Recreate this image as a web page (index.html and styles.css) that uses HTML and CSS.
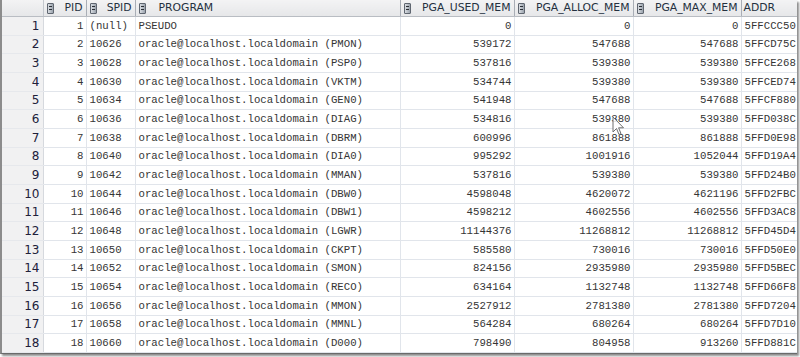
FILE: index.html
```html
<!DOCTYPE html>
<html>
<head>
  <title>Query Result</title>
  <link rel="stylesheet" href="styles.css">
</head>
<body>
  <div class="grid-frame">
    <table class="result-grid">
      <colgroup>
        <col class="c-num">
        <col class="c-pid">
        <col class="c-spid">
        <col class="c-program">
        <col class="c-used">
        <col class="c-alloc">
        <col class="c-max">
        <col class="c-addr">
      </colgroup>
      <thead>
        <tr>
          <th class="row-head"></th>
          <th><div class="head right"><span class="sort"></span><span class="title">PID</span></div></th>
          <th><div class="head right"><span class="sort"></span><span class="title">SPID</span></div></th>
          <th><div class="head"><span class="sort wide"></span><span class="title">PROGRAM</span></div></th>
          <th><div class="head right"><span class="sort"></span><span class="title">PGA_USED_MEM</span></div></th>
          <th><div class="head right"><span class="sort"></span><span class="title">PGA_ALLOC_MEM</span></div></th>
          <th><div class="head right"><span class="sort"></span><span class="title">PGA_MAX_MEM</span></div></th>
          <th><div class="head plain"><span class="title">ADDR</span></div></th>
        </tr>
      </thead>
      <tbody>
        <tr><td class="row-num">1</td><td class="num">1</td><td>(null)</td><td>PSEUDO</td><td class="num">0</td><td class="num">0</td><td class="num">0</td><td>5FFCCC50</td></tr>
        <tr><td class="row-num">2</td><td class="num">2</td><td>10626</td><td>oracle@localhost.localdomain (PMON)</td><td class="num">539172</td><td class="num">547688</td><td class="num">547688</td><td>5FFCD75C</td></tr>
        <tr><td class="row-num">3</td><td class="num">3</td><td>10628</td><td>oracle@localhost.localdomain (PSP0)</td><td class="num">537816</td><td class="num">539380</td><td class="num">539380</td><td>5FFCE268</td></tr>
        <tr><td class="row-num">4</td><td class="num">4</td><td>10630</td><td>oracle@localhost.localdomain (VKTM)</td><td class="num">534744</td><td class="num">539380</td><td class="num">539380</td><td>5FFCED74</td></tr>
        <tr><td class="row-num">5</td><td class="num">5</td><td>10634</td><td>oracle@localhost.localdomain (GEN0)</td><td class="num">541948</td><td class="num">547688</td><td class="num">547688</td><td>5FFCF880</td></tr>
        <tr><td class="row-num">6</td><td class="num">6</td><td>10636</td><td>oracle@localhost.localdomain (DIAG)</td><td class="num">534816</td><td class="num">539380</td><td class="num">539380</td><td>5FFD038C</td></tr>
        <tr><td class="row-num">7</td><td class="num">7</td><td>10638</td><td>oracle@localhost.localdomain (DBRM)</td><td class="num">600996</td><td class="num">861888</td><td class="num">861888</td><td>5FFD0E98</td></tr>
        <tr><td class="row-num">8</td><td class="num">8</td><td>10640</td><td>oracle@localhost.localdomain (DIA0)</td><td class="num">995292</td><td class="num">1001916</td><td class="num">1052044</td><td>5FFD19A4</td></tr>
        <tr><td class="row-num">9</td><td class="num">9</td><td>10642</td><td>oracle@localhost.localdomain (MMAN)</td><td class="num">537816</td><td class="num">539380</td><td class="num">539380</td><td>5FFD24B0</td></tr>
        <tr><td class="row-num">10</td><td class="num">10</td><td>10644</td><td>oracle@localhost.localdomain (DBW0)</td><td class="num">4598048</td><td class="num">4620072</td><td class="num">4621196</td><td>5FFD2FBC</td></tr>
        <tr><td class="row-num">11</td><td class="num">11</td><td>10646</td><td>oracle@localhost.localdomain (DBW1)</td><td class="num">4598212</td><td class="num">4602556</td><td class="num">4602556</td><td>5FFD3AC8</td></tr>
        <tr><td class="row-num">12</td><td class="num">12</td><td>10648</td><td>oracle@localhost.localdomain (LGWR)</td><td class="num">11144376</td><td class="num">11268812</td><td class="num">11268812</td><td>5FFD45D4</td></tr>
        <tr><td class="row-num">13</td><td class="num">13</td><td>10650</td><td>oracle@localhost.localdomain (CKPT)</td><td class="num">585580</td><td class="num">730016</td><td class="num">730016</td><td>5FFD50E0</td></tr>
        <tr><td class="row-num">14</td><td class="num">14</td><td>10652</td><td>oracle@localhost.localdomain (SMON)</td><td class="num">824156</td><td class="num">2935980</td><td class="num">2935980</td><td>5FFD5BEC</td></tr>
        <tr><td class="row-num">15</td><td class="num">15</td><td>10654</td><td>oracle@localhost.localdomain (RECO)</td><td class="num">634164</td><td class="num">1132748</td><td class="num">1132748</td><td>5FFD66F8</td></tr>
        <tr><td class="row-num">16</td><td class="num">16</td><td>10656</td><td>oracle@localhost.localdomain (MMON)</td><td class="num">2527912</td><td class="num">2781380</td><td class="num">2781380</td><td>5FFD7204</td></tr>
        <tr><td class="row-num">17</td><td class="num">17</td><td>10658</td><td>oracle@localhost.localdomain (MMNL)</td><td class="num">564284</td><td class="num">680264</td><td class="num">680264</td><td>5FFD7D10</td></tr>
        <tr><td class="row-num">18</td><td class="num">18</td><td>10660</td><td>oracle@localhost.localdomain (D000)</td><td class="num">798490</td><td class="num">804958</td><td class="num">913260</td><td>5FFD881C</td></tr>
      </tbody>
    </table>

    <!-- mouse pointer left in the screenshot -->
    <svg class="pointer" width="13" height="20" viewBox="0 0 13 20">
      <path d="M1 1 L1 16 L4.5 12.5 L7 18.5 L9 17.6 L6.6 11.8 L11.5 11.8 Z" fill="#fff" fill-opacity="0.85" stroke="#6e6e6e" stroke-width="1"/>
    </svg>
  </div>
</body>
</html>
```

FILE: styles.css
```css
html, body {
  margin: 0;
  padding: 0;
  background: #fff;
}

body {
  width: 800px;
  height: 357px;
  overflow: hidden;
}

.grid-frame {
  position: relative;
  width: 795px;
  height: 353px;
  border-left: 2px solid #8c8c8c;
  border-bottom: 1px solid #6a6a6a;
  box-shadow: 2px 2px 2px rgba(0, 0, 0, 0.45);
  overflow: hidden;
  background: #fff;
}

.result-grid {
  width: 795px;
  table-layout: fixed;
  border-collapse: collapse;
  font-family: "Liberation Mono", monospace;
  font-size: 10.7px;
  color: #353535;
}

.c-num { width: 41px; }
.c-pid { width: 43px; }
.c-spid { width: 49px; }
.c-program { width: 265px; }
.c-used { width: 114px; }
.c-alloc { width: 119px; }
.c-max { width: 108px; }
.c-addr { width: 56px; }

.result-grid th {
  height: 16px;
  padding: 0;
  background: linear-gradient(#f3f3f4, #e6e7e9);
  border-right: 1px solid #a9aeb6;
  border-bottom: 1px solid #b9bdc3;
  font-family: "DejaVu Sans", sans-serif;
  font-size: 10.8px;
  font-weight: normal;
  color: #243040;
  white-space: nowrap;
  overflow: hidden;
}

.head {
  display: flex;
  align-items: center;
  height: 16px;
  padding: 0 3px 0 3px;
  overflow: hidden;
}

.head.plain {
  padding-left: 2px;
}

.head .title {
  flex: none;
  line-height: 16px;
}

.head.right .title {
  margin-left: auto;
}

.sort {
  flex: none;
  position: relative;
  width: 5px;
  height: 9px;
  margin-right: 4px;
  border: 1px solid #5f6670;
  border-radius: 1px;
  background: linear-gradient(90deg, #d9dde2, #9aa2ac);
}

.sort.wide {
  margin-right: 13px;
}

.sort::before,
.sort::after {
  content: "";
  position: absolute;
  left: 1px;
  width: 3px;
  height: 1px;
  background: #2b2f36;
}

.sort::before { top: 2px; }
.sort::after { top: 5px; }

.result-grid th.row-head {
  border-right: 1px solid #c4c8ce;
}

.result-grid td {
  height: 17.67px;
  padding: 0 2px 0 3px;
  line-height: 12px;
  border-right: 1px solid #e1e5eb;
  border-bottom: 1px solid #e1e5eb;
  white-space: nowrap;
  overflow: hidden;
}

.result-grid td.num {
  text-align: right;
}

.result-grid td.row-num {
  padding: 0 3px 0 0;
  text-align: right;
  background: #f1f1f2;
  border-right: 1px solid #d6d9de;
  border-bottom: 1px solid #e6e8ec;
  font-family: "DejaVu Sans", sans-serif;
  font-size: 12px;
  color: #20203a;
}

.pointer {
  position: absolute;
  left: 610px;
  top: 116px;
}
```
